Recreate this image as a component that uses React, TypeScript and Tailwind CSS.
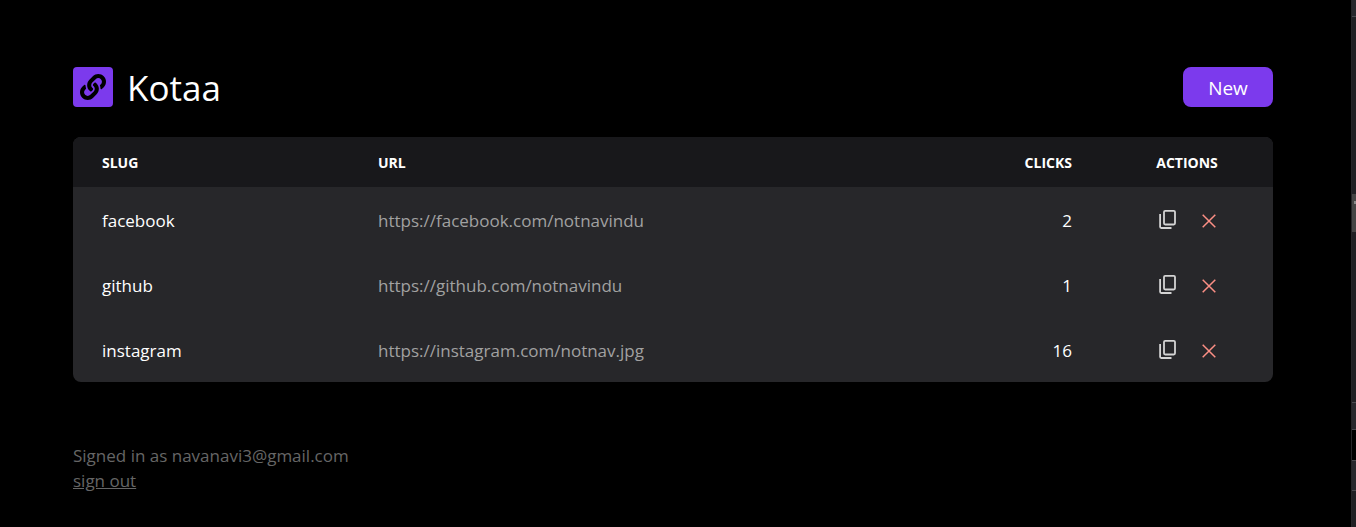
import { FaLink } from "react-icons/fa";

const links = [
  { slug: "facebook", url: "https://facebook.com/notnavindu", clicks: 2 },
  { slug: "github", url: "https://github.com/notnavindu", clicks: 1 },
  { slug: "instagram", url: "https://instagram.com/notnav.jpg", clicks: 16 },
];

function CopyIcon() {
  return (
    <svg width="20" height="22" viewBox="0 1 20 22" fill="none" stroke="#d4d4d4" strokeWidth="1.8" aria-hidden="true">
      <rect x="6" y="1.9" width="11" height="13.6" rx="1.2" />
      <path d="M2.1 5v12.8q0 1.2 1.2 1.2H13.5" />
    </svg>
  );
}

function CrossIcon() {
  return (
    <svg width="14" height="14" viewBox="0 0 14 14" fill="none" stroke="#fc8f85" strokeWidth="1.5" aria-hidden="true">
      <path d="M.7.7l12.6 12.6M13.3.7L.7 13.3" />
    </svg>
  );
}

function SidePanel() {
  return (
    <aside className="flex w-[5px] shrink-0 flex-col border-l border-[#252528] bg-[#202024]">
      <div className="h-4 bg-[#28282d]" />
      <div className="h-px bg-[#4a4a4f]" />
      <div className="h-[177px]" />
      <div className="flex h-[38px] justify-end bg-[#454545] pt-[7px]">
        <div className="h-[3px] w-0.5 bg-[#8a8a8a]" />
      </div>
      <div className="h-[170px]" />
      <div className="h-px bg-[#4a4a4f]" />
      <div className="h-[26px] bg-[#28282d]" />
      <div className="h-px bg-[#4a4a4f]" />
      <div className="h-[30px] bg-black" />
      <div className="h-px bg-[#4a4a4f]" />
      <div className="h-[29px] bg-[#28282d]" />
      <div className="h-px bg-[#4a4a4f]" />
    </aside>
  );
}

export default function App() {
  return (
    <div className="flex min-h-screen bg-black font-['Open_Sans','Noto_Sans',sans-serif] text-[17px] text-white">
      <main className="min-w-0 flex-1 pt-[67px] pr-[78px] pb-8 pl-[73px]">
        <header className="flex h-10 items-center justify-between">
          <div className="flex items-center gap-3.5">
            <div className="flex size-10 items-center justify-center rounded bg-[#7c3aed] text-black">
              <FaLink size={26} aria-hidden="true" />
            </div>
            <h1 className="pt-0.5 text-[35px] leading-10">Kotaa</h1>
          </div>
          <button type="button" className="h-10 w-[90px] rounded-lg bg-[#7c3aed] pt-0.5 text-[19px]">
            New
          </button>
        </header>

        <div className="mt-[30px] overflow-hidden rounded-lg bg-[#27272a]">
          <table className="w-full table-fixed">
            <thead className="bg-[#18181b] text-[14px]">
              <tr className="h-[50px]">
                <th className="w-[23%] pl-[29px] text-left">SLUG</th>
                <th className="pl-[29px] text-left">URL</th>
                <th className="w-[200px] pr-[29px] text-right">CLICKS</th>
                <th className="w-[172px]">ACTIONS</th>
              </tr>
            </thead>
            <tbody>
              {links.map((link) => (
                <tr key={link.slug} className="h-[65px]">
                  <td className="pt-0.5 pl-[29px]">{link.slug}</td>
                  <td className="pt-0.5 pl-[29px] text-[#a1a1a1]">{link.url}</td>
                  <td className="pt-0.5 pr-[29px] text-right">{link.clicks}</td>
                  <td className="pt-0.5">
                    <div className="flex items-center justify-center gap-6">
                      <button type="button" aria-label={`Copy ${link.slug}`}>
                        <CopyIcon />
                      </button>
                      <button type="button" aria-label={`Delete ${link.slug}`}>
                        <CrossIcon />
                      </button>
                    </div>
                  </td>
                </tr>
              ))}
            </tbody>
          </table>
        </div>

        <footer className="mt-[61px] leading-[25px] text-[#666666]">
          <p>Signed in as navanavi3@gmail.com</p>
          <a href="#sign-out" className="underline">
            sign out
          </a>
        </footer>
      </main>
      <SidePanel />
    </div>
  );
}
